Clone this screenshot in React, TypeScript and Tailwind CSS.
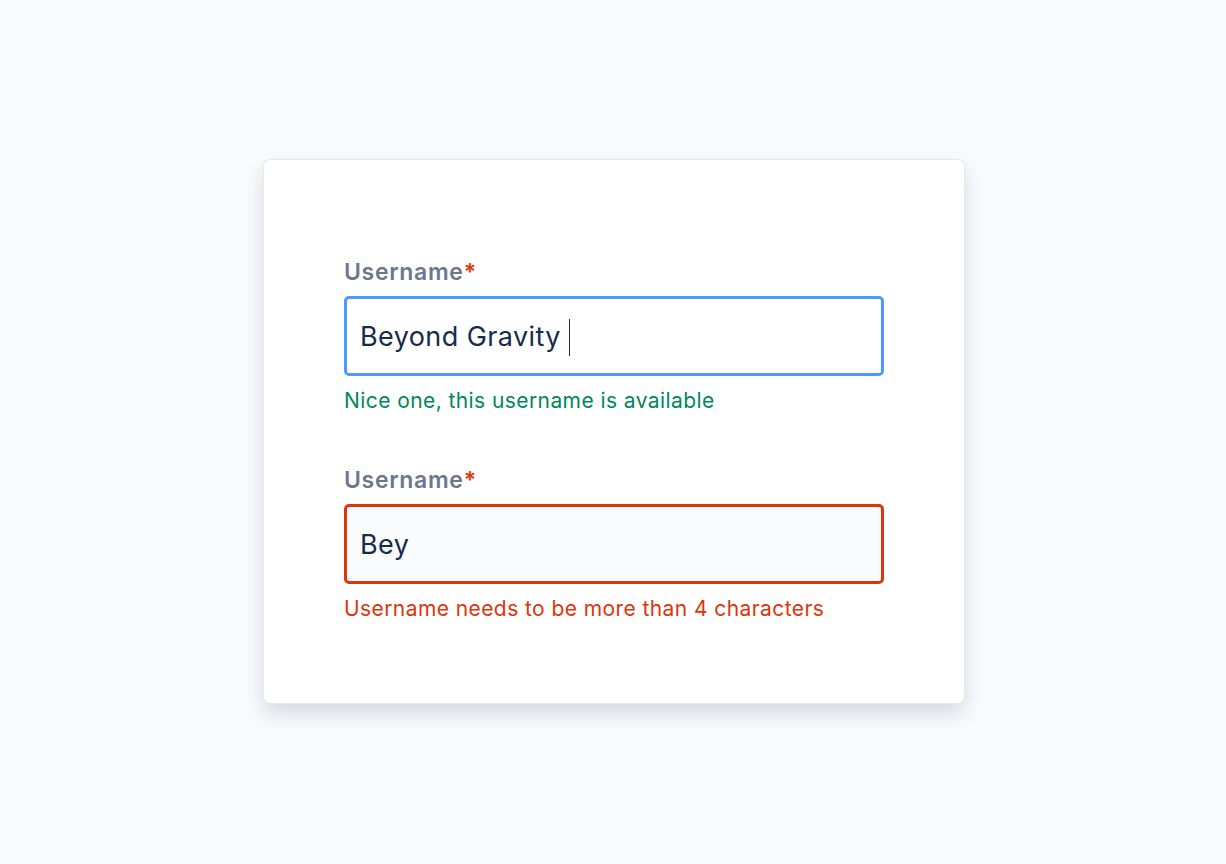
import React from 'react';

const Field: React.FC<{ value: string; valid: boolean; message: string }> = ({ value, valid, message }) => {
  return (
    <div>
      <label className="block text-[23px] leading-[28px] font-semibold tracking-[0.03em] text-[#6b778c]">
        Username<span className="text-[#de350b]">*</span>
      </label>
      <div
        className={`mt-[10px] h-[80px] rounded-[5px] border-[3px] flex items-center px-[13px] pt-[3px] ${
          valid ? 'border-[#4c9aff] bg-white' : 'border-[#de350b] bg-[#fafbfc]'
        }`}
      >
        <span className="text-[27px] tracking-[0.015em] text-[#172b4d]">{value}</span>
        {valid && <span className="ml-[8px] w-px h-[37px] bg-[#172b4d]" />}
      </div>
      <p
        className={`mt-[11px] text-[21px] leading-[28px] tracking-[0.02em] ${
          valid ? 'text-[#00875a]' : 'text-[#de350b]'
        }`}
      >
        {message}
      </p>
    </div>
  );
};

export default function App() {
  return (
    <div
      className="min-h-screen w-full bg-[#f9fafc] flex justify-center pt-[160px] pl-[2px]"
      style={{ fontFamily: 'Inter, "Noto Sans", sans-serif' }}
    >
      <div className="w-[700px] h-[543px] bg-white rounded-[6px] shadow-[0_0_0_1px_#e6e8ec,0_10px_20px_rgba(9,30,66,0.15)] pt-[98px] px-[80px]">
        <Field value="Beyond Gravity" valid message="Nice one, this username is available" />
        <div className="mt-[51px]">
          <Field value="Bey" valid={false} message="Username needs to be more than 4 characters" />
        </div>
      </div>
    </div>
  );
}
